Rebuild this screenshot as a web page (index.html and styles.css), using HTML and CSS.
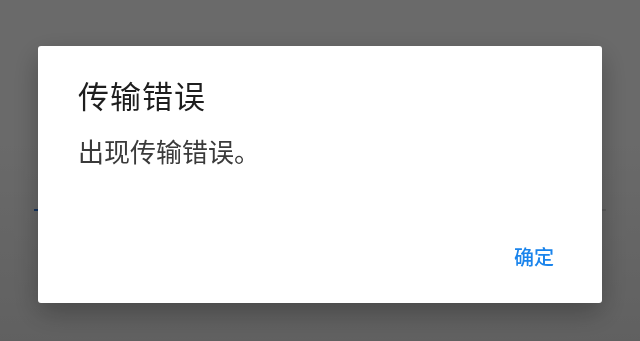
FILE: index.html
```html
<!DOCTYPE html>
<html lang="zh-CN">
<head>
    <meta charset="utf-8">
    <title>传输错误</title>
    <link rel="stylesheet" href="styles.css">
</head>
<body>
    <div class="page">
        <div class="progress"><div class="progress-bar"></div></div>
    </div>

    <div class="overlay">
        <div class="dialog">
            <h2 class="dialog-title">传输错误</h2>
            <p class="dialog-message">出现传输错误。</p>
            <div class="dialog-actions">
                <button class="btn-text">确定</button>
            </div>
        </div>
    </div> <!-- /overlay -->
</body>
</html>
```

FILE: styles.css
```css
html {
	font-family: "Noto Sans CJK SC", "Noto Sans", sans-serif;
}
body {
	margin: 0;
	background-color: #fff;
}
.page {
	height: 341px;
	padding-top: 209px;
	box-sizing: border-box;
	background: linear-gradient(#fff, #fff 40%, #e8e8e8);
}
.progress {
	margin: 0 34px;
	height: 2px;
	background-color: #d8d8d8;
}
.progress-bar {
	width: 6px;
	height: 100%;
	background-color: #2f7ae0;
}
.overlay {
	position: fixed;
	top: 0;
	left: 0;
	right: 0;
	bottom: 0;
	background-color: rgba(0, 0, 0, 0.585);
	display: flex;
	justify-content: center;
	align-items: flex-start;
	padding-top: 46px;
}
.dialog {
	width: 564px;
	height: 257px;
	box-sizing: border-box;
	padding: 29px 40px 28px 40px;
	background-color: #fff;
	border-radius: 3px;
	box-shadow: 0 10px 28px rgba(0, 0, 0, 0.28);
	display: flex;
	flex-direction: column;
}
.dialog-title {
	margin: 0;
	font-size: 31px;
	font-weight: 400;
	line-height: 40px;
	letter-spacing: 1px;
	color: #1e1e1e;
}
.dialog-message {
	margin: 18px 0 0;
	font-size: 26px;
	line-height: 36px;
	color: #3a3a3a;
}
.dialog-actions {
	margin-top: auto;
	display: flex;
	justify-content: flex-end;
}
.btn-text {
	border: 0;
	background: none;
	padding: 0 8px;
	font-family: inherit;
	font-size: 20px;
	font-weight: 500;
	line-height: 36px;
	color: #1a84ec;
}
```
